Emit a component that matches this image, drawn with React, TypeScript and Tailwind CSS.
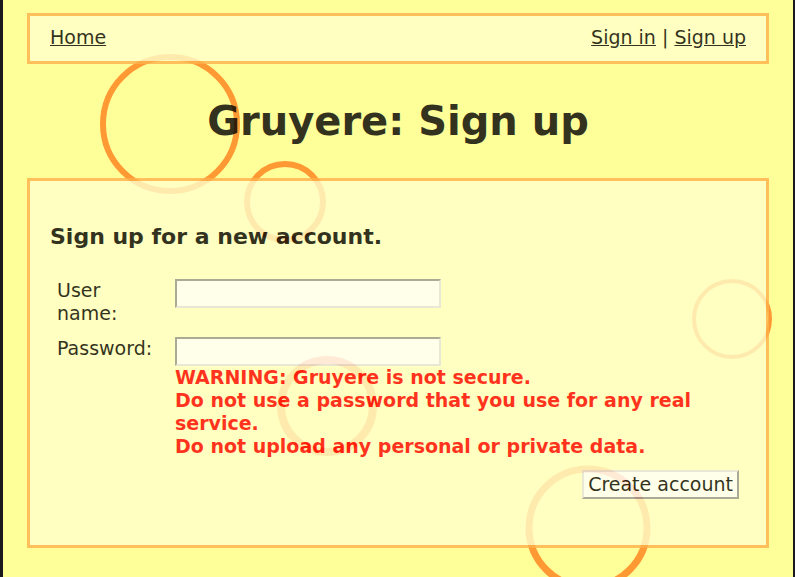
const circles = [
  { cx: 170, cy: 124, r: 67, width: 6 },
  { cx: 285, cy: 202, r: 38, width: 6 },
  { cx: 327, cy: 406, r: 46, width: 8 },
  { cx: 732, cy: 319, r: 38, width: 4 },
  { cx: 588, cy: 528, r: 59, width: 7 },
];

function CheeseHoles() {
  return (
    <svg className="absolute inset-0 -z-10 h-full w-full" aria-hidden="true">
      {circles.map((c) => (
        <circle
          key={c.cx}
          cx={c.cx - 3}
          cy={c.cy}
          r={c.r}
          fill="none"
          stroke="#ff9933"
          strokeWidth={c.width}
        />
      ))}
    </svg>
  );
}

const fieldClass =
  "block h-[29px] w-[266px] max-w-full border-2 border-t-[#959595] border-l-[#959595] border-r-[#e3e3e3] border-b-[#e3e3e3] bg-white px-1 outline-none";

export default function App() {
  return (
    <div className="relative isolate min-h-screen overflow-hidden border-l-3 border-r-2 border-[#1a1a1c] bg-[#ffff99] px-6 pt-[13px] pb-[29px] font-['DejaVu_Sans',sans-serif] text-[19px] leading-[23px] text-black">
      <CheeseHoles />

      <nav className="flex justify-between border-3 border-[#ffb14c] bg-[#ffffcc] px-5 pt-[10px] pb-3 opacity-80">
        <a href="#home" className="underline">
          Home
        </a>
        <div>
          <a href="#signin" className="underline">
            Sign in
          </a>
          {" | "}
          <a href="#signup" className="underline">
            Sign up
          </a>
        </div>
      </nav>

      <h1 className="my-[33px] text-center text-[40px] leading-[48px] font-bold opacity-80">
        Gruyere: Sign up
      </h1>

      <main className="border-3 border-[#ffb14c] bg-[#ffffcc] px-5 pt-[42px] pb-[46px] opacity-80">
        <h2 className="text-[22px] leading-[28px] font-bold">Sign up for a new account.</h2>

        <form
          className="mt-7 grid grid-cols-[94px_1fr] gap-x-6 gap-y-3 px-[7px]"
          onSubmit={(e) => e.preventDefault()}
        >
          <label htmlFor="uid">User name:</label>
          <div>
            <input id="uid" name="uid" type="text" className={fieldClass} />
          </div>

          <label htmlFor="pw">Password:</label>
          <div>
            <input id="pw" name="pw" type="password" className={fieldClass} />
            <p className="font-bold text-[#ff0000]">
              WARNING: Gruyere is not secure.
              <br />
              Do not use a password that you use for any real service.
              <br />
              Do not upload any personal or private data.
            </p>
          </div>

          <div className="col-span-2 flex justify-end">
            <button
              type="submit"
              className="h-[29px] border-2 border-t-[#e3e3e3] border-l-[#e3e3e3] border-r-[#959595] border-b-[#959595] bg-white px-1"
            >
              Create account
            </button>
          </div>
        </form>
      </main>
    </div>
  );
}
